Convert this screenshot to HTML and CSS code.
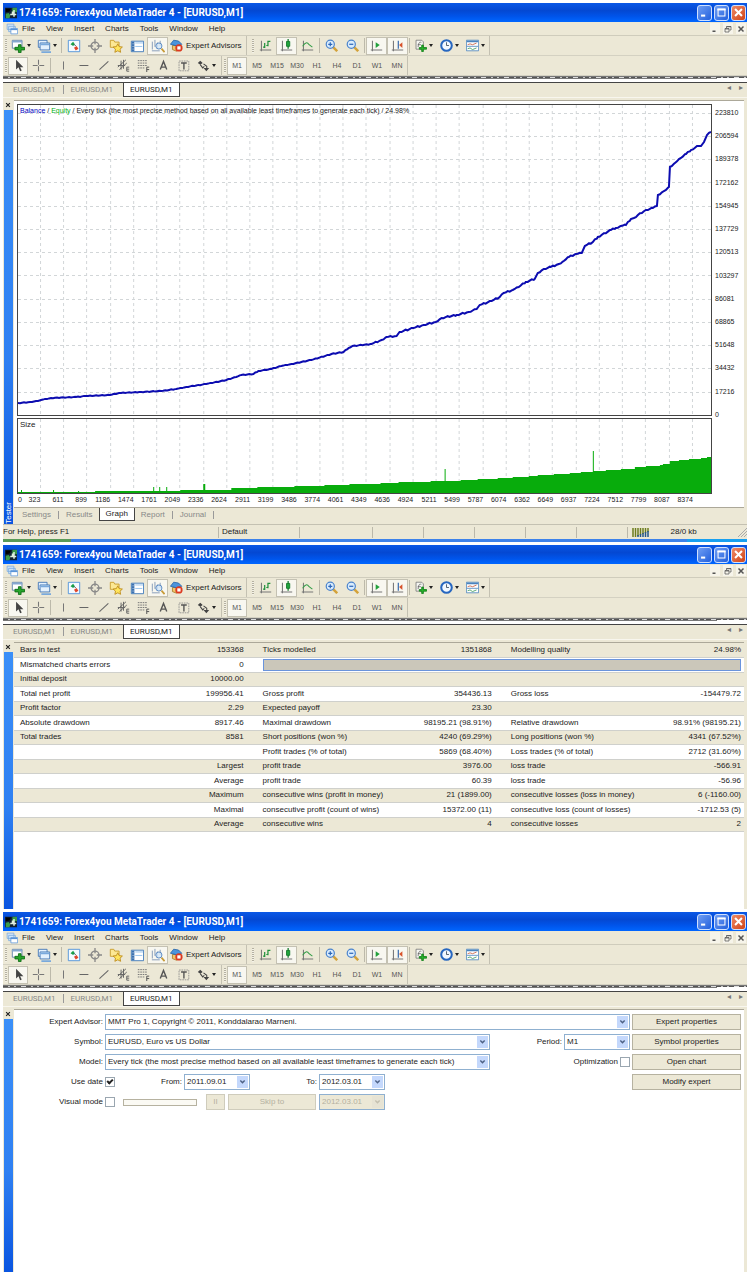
FILE: index.html
```html
<!DOCTYPE html>
<html lang="en">
<head>
<meta charset="utf-8">
<title>1741659: Forex4you MetaTrader 4 - [EURUSD,M1]</title>
<link rel="stylesheet" href="styles.css">
</head>
<body>
<svg class="sprite" aria-hidden="true">
  <symbol id="i-logo" viewBox="0 0 16 16"><path fill="#123" d="M0 1h16v14H0z"/><path fill="#3c9a4a" d="M10 1h6v6h-3l-2 3H9zM1 9l4-1 2 3-1 4H1z"/><path fill="#000" d="M1 2h7L6 6l-5 1z"/><path fill="#dfeee0" d="M11 4h2v9h-2zM7 9h8v2H7zM9 6h2v3H9z"/></symbol>
  <symbol id="i-child" viewBox="0 0 16 16"><path fill="#cfe4fa" stroke="#7aaade" d="M1.500 1.500h9v7h-9zM3.500 4.500h9v7h-9z"/><path fill="#fff" stroke="#5a94d8" d="M6.500 7.500h9v7h-9z"/><path stroke="#5a94d8" stroke-width="2" d="M6 8.500h9"/></symbol>
  <symbol id="i-new" viewBox="0 0 16 16"><path fill="#fff" stroke="#5c7fa8" d="M1.500 1.500h11v9h-11z"/><path stroke="#86a8d0" stroke-width="2" d="M1 3h12"/><path fill="#27a52c" stroke="#0d6d14" d="M8.500 6.500h3v3h4v3h-4v3h-3v-3h-4v-3h4z"/></symbol>
  <symbol id="i-prof" viewBox="0 0 16 16"><path fill="#e4f1fd" stroke="#3f74b4" d="M1.500 1.500h10v8h-10z"/><path fill="#e4f1fd" stroke="#3f74b4" d="M3.500 4.500h11v8h-11z"/><path stroke="#79a9dc" stroke-width="2" d="M4 6h10M5 15h11"/></symbol>
  <symbol id="i-market" viewBox="0 0 16 16"><path fill="#f4faff" stroke="#4a8fd8" d="M1.500 1.500h13v13h-13z"/><path fill="#19a04a" d="M4 6l3-3 2 3-2 2z"/><path fill="#e0452a" d="M8 10l3-2 2 3-3 2z"/><path stroke="#345" d="M8 6l2 2"/></symbol>
  <symbol id="i-cross" viewBox="0 0 16 16"><circle cx="8" cy="8" r="4.500" fill="none" stroke="#888" stroke-width="1.500"/><path stroke="#888" stroke-width="1.500" d="M8 0v6M8 10v6M0 8h6M10 8h6"/></symbol>
  <symbol id="i-star" viewBox="0 0 16 16"><path fill="#fce894" stroke="#c79a28" d="M1.500 3.500v-2h4l1 2h5v6h-10z"/><path fill="#ffe55c" stroke="#bd8a1c" d="M10 5.500l1.600 3.200 3.700.5-2.700 2.400.7 3.600L10 13.500l-3.300 1.700.7-3.600-2.700-2.400 3.700-.5z"/></symbol>
  <symbol id="i-data" viewBox="0 0 16 16"><path fill="#fff" stroke="#3875b8" d="M1.500 2.500h14v12h-14z"/><path fill="#3a70b0" d="M2 3h3v11H2z"/><path stroke="#8dbce8" d="M6 4.500h9M6 8.500h8"/><path stroke="#fff" d="M3 5.500h1M3 8.500h1M3 11.500h1"/></symbol>
  <symbol id="i-test" viewBox="0 0 16 16"><path fill="none" stroke="#7b93b5" d="M1.500 12V3M4.500 9V1M7.500 11V4M10.500 8V2M1 13.500h9"/><circle cx="9" cy="8" r="3.500" fill="#d4e8fa" fill-opacity=".8" stroke="#4d7fbd"/><path stroke="#c89b38" stroke-width="2" d="M12 11l3.500 4"/></symbol>
  <symbol id="i-ea" viewBox="0 0 16 16"><path fill="#f1c66c" stroke="#a67824" d="M3 8h8l1 4-4 3-5-2z"/><path fill="#4b94dc" stroke="#2463a8" d="M0.500 6.500l4-5 6 1 4 4-6 2z"/><circle cx="11" cy="11" r="4.500" fill="#dc3a20"/><path fill="#fff" d="M9 9h4v4H9z"/></symbol>
  <symbol id="i-bar" viewBox="0 0 16 16"><path fill="none" stroke="#777" stroke-width="1.300" d="M3 2v13M1 13.500h14"/><path fill="none" stroke="#20913b" stroke-width="1.500" d="M7 11V5M7 10H5M11 9V2M11 3h3M9 8h2"/></symbol>
  <symbol id="i-candle" viewBox="0 0 16 16"><path fill="none" stroke="#777" stroke-width="1.300" d="M3 2v13M1 13.500h14"/><path stroke="#0b7524" stroke-width="1.500" d="M10 0v12"/><path fill="#1fa33c" stroke="#0b7524" d="M8 3h4v6H8z"/></symbol>
  <symbol id="i-line" viewBox="0 0 16 16"><path fill="none" stroke="#777" stroke-width="1.300" d="M3 2v13M1 13.500h14"/><path fill="none" stroke="#349d48" stroke-width="1.300" d="M2 9c4-6 6-5 8-2l4 3"/></symbol>
  <symbol id="i-zin" viewBox="0 0 16 16"><path stroke="#d3a23a" stroke-width="3" d="M10 10l5 5"/><circle cx="6.500" cy="6.500" r="5" fill="#d9ecfd" stroke="#4a83cc" stroke-width="1.500"/><path stroke="#2c66b8" stroke-width="1.500" d="M4 6.500h5M6.500 4v5"/></symbol>
  <symbol id="i-zout" viewBox="0 0 16 16"><path stroke="#d3a23a" stroke-width="3" d="M10 10l5 5"/><circle cx="6.500" cy="6.500" r="5" fill="#d9ecfd" stroke="#4a83cc" stroke-width="1.500"/><path stroke="#2c66b8" stroke-width="1.500" d="M4 6.500h5"/></symbol>
  <symbol id="i-scroll" viewBox="0 0 16 16"><path fill="none" stroke="#777" stroke-width="1.300" d="M3 2v13M1 13.500h14"/><path fill="#22a03c" d="M7 4l5 3.500L7 11z"/></symbol>
  <symbol id="i-shift" viewBox="0 0 16 16"><path fill="none" stroke="#777" stroke-width="1.300" d="M3 2v13M1 13.500h14"/><path stroke="#3a6cae" stroke-width="1.500" d="M9 2v10"/><path fill="#d8532b" d="M10 7.500L14 4v7z"/></symbol>
  <symbol id="i-ind" viewBox="0 0 16 16"><path fill="#f6f6f2" stroke="#777" d="M2.500 1.500h7l2 2v9h-9z"/><path fill="none" stroke="#666" d="M5 10c1-7 2-6 4-6M4.500 7h4"/><path fill="#27b52c" stroke="#0d7d14" d="M9.500 7.500h2v3h4v2h-4v3h-2v-3h-3v-2h3z"/></symbol>
  <symbol id="i-clock" viewBox="0 0 16 16"><circle cx="8" cy="8" r="6.500" fill="#f2f8ff" stroke="#2767c0" stroke-width="2.500"/><path fill="none" stroke="#345" d="M8 4v4h3"/></symbol>
  <symbol id="i-tpl" viewBox="0 0 16 16"><path fill="#fff" stroke="#4a83bd" d="M0.500 1.500h15v13H.5z"/><path stroke="#4a83bd" stroke-width="2" d="M1 3h14"/><path fill="none" stroke="#c45a3a" d="M2 7l3-1 3 1 5-2"/><path stroke="#4a83bd" d="M1 9h14"/><path fill="none" stroke="#3a9a58" d="M2 12l3-1 3 2 5-2"/></symbol>
  <symbol id="i-ptr" viewBox="0 0 16 16"><path fill="#444" d="M5 1v12l3-3 2 5 2-1-2-4h4z"/></symbol>
  <symbol id="i-plus" viewBox="0 0 16 16"><path stroke="#777" stroke-width="1.300" d="M8 1v6M8 9v6M1 8h6M9 8h6"/></symbol>
  <symbol id="i-v" viewBox="0 0 16 16"><path stroke="#777" stroke-width="1.300" d="M8 3v10"/></symbol>
  <symbol id="i-h" viewBox="0 0 16 16"><path stroke="#666" stroke-width="1.300" d="M3 8h11"/></symbol>
  <symbol id="i-s" viewBox="0 0 16 16"><path stroke="#666" stroke-width="1.300" d="M3 13L14 3"/></symbol>
  <symbol id="i-chan" viewBox="0 0 16 16"><path fill="none" stroke="#666" stroke-width="1.200" d="M1 10l10-9M3 13l9-8M5 2v11M8 1v11M1 8h9M15 10h-3v5h3M12 12.500h3"/></symbol>
  <symbol id="i-fibo" viewBox="0 0 16 16"><path fill="none" stroke="#777" stroke-width="1.200" stroke-dasharray="2 1" d="M1 2h12M1 5h12M1 8h12M1 11h9"/><path fill="none" stroke="#555" stroke-width="1.200" d="M15 10h-3v6M12 13h3"/></symbol>
  <symbol id="i-a" viewBox="0 0 16 16"><path fill="none" stroke="#555" stroke-width="1.700" d="M4 13L8 3l4 10M5.500 10h5"/></symbol>
  <symbol id="i-t" viewBox="0 0 16 16"><path fill="none" stroke="#888" stroke-dasharray="2 1" d="M2.500 2.500h12v12h-12z"/><path fill="none" stroke="#555" stroke-width="1.700" d="M5 5h7M8.500 5v8"/></symbol>
  <symbol id="i-arr" viewBox="0 0 16 16"><path fill="#444" d="M1 5l3-3 3 3-3 2zM8 11h7l-3.500 4z"/><path fill="none" stroke="#444" stroke-width="1.300" d="M4 7l3 4 2-2M8 6l4 3v2"/></symbol>
  <symbol id="i-chev" viewBox="0 0 10 14"><path fill="none" stroke="currentColor" stroke-width="2" d="M2 5l3 3 3-3"/></symbol>
  <symbol id="i-min" viewBox="0 0 16 16"><path fill="currentColor" d="M3 11h6v3H3z"/></symbol>
  <symbol id="i-max" viewBox="0 0 16 16"><path fill="none" stroke="currentColor" stroke-width="1.500" d="M3 3.500h10V13H3z"/><path fill="currentColor" d="M2 2h12v3H2z"/></symbol>
  <symbol id="i-res" viewBox="0 0 16 16"><path fill="none" stroke="currentColor" stroke-width="1.500" d="M2 7h8v7H2zM5 6V3h9v7h-3M5 3.500h9M2 8h8"/></symbol>
  <symbol id="i-x" viewBox="0 0 16 16"><path fill="none" stroke="currentColor" stroke-width="3" d="M3 3l10 10M13 3L3 13"/></symbol>
</svg>

<template id="frame">
  <header class="titlebar">
    <svg class="logo"><use href="#i-logo"/></svg>
    <h1 class="title">1741659: Forex4you MetaTrader 4 - [EURUSD,M1]</h1>
    <div class="caption-buttons">
      <button class="cap" aria-label="Minimize"><svg><use href="#i-min"/></svg></button>
      <button class="cap" aria-label="Maximize"><svg><use href="#i-max"/></svg></button>
      <button class="cap cap-close" aria-label="Close"><svg><use href="#i-x"/></svg></button>
    </div>
  </header>
  <nav class="menubar">
    <svg class="menu-icon"><use href="#i-child"/></svg>
    <button>File</button><button>View</button><button>Insert</button><button>Charts</button><button>Tools</button><button>Window</button><button>Help</button>
    <div class="child-buttons">
      <button aria-label="Minimize chart"><svg><use href="#i-min"/></svg></button>
      <button aria-label="Restore chart"><svg><use href="#i-res"/></svg></button>
      <button aria-label="Close chart"><svg><use href="#i-x"/></svg></button>
    </div>
  </nav>
  <div class="toolbar toolbar-main">
    <div class="tools">
      <button class="tool drop" aria-label="New chart"><svg><use href="#i-new"/></svg></button>
      <button class="tool drop" aria-label="Profiles"><svg><use href="#i-prof"/></svg></button>
      <i class="sep"></i>
      <button class="tool" aria-label="Market watch"><svg><use href="#i-market"/></svg></button>
      <button class="tool" aria-label="Data window"><svg><use href="#i-cross"/></svg></button>
      <button class="tool" aria-label="Navigator"><svg><use href="#i-star"/></svg></button>
      <button class="tool" aria-label="Terminal"><svg><use href="#i-data"/></svg></button>
      <button class="tool on" aria-label="Strategy tester"><svg><use href="#i-test"/></svg></button>
      <button class="tool wide"><svg><use href="#i-ea"/></svg>Expert Advisors</button>
    </div>
    <div class="tools charts">
      <button class="tool" aria-label="Bar chart"><svg><use href="#i-bar"/></svg></button>
      <button class="tool on" aria-label="Candlesticks"><svg><use href="#i-candle"/></svg></button>
      <button class="tool" aria-label="Line chart"><svg><use href="#i-line"/></svg></button>
      <i class="sep"></i>
      <button class="tool" aria-label="Zoom in"><svg><use href="#i-zin"/></svg></button>
      <button class="tool" aria-label="Zoom out"><svg><use href="#i-zout"/></svg></button>
      <i class="sep"></i>
      <button class="tool on" aria-label="Auto scroll"><svg><use href="#i-scroll"/></svg></button>
      <button class="tool on" aria-label="Chart shift"><svg><use href="#i-shift"/></svg></button>
      <i class="sep"></i>
      <button class="tool drop" aria-label="Indicators"><svg><use href="#i-ind"/></svg></button>
      <button class="tool drop" aria-label="Periods"><svg><use href="#i-clock"/></svg></button>
      <button class="tool drop" aria-label="Templates"><svg><use href="#i-tpl"/></svg></button>
    </div>
  </div>
  <div class="toolbar toolbar-draw">
    <div class="tools">
      <button class="tool on" aria-label="Cursor"><svg><use href="#i-ptr"/></svg></button>
      <button class="tool" aria-label="Crosshair"><svg><use href="#i-plus"/></svg></button>
      <i class="sep"></i>
      <button class="tool" aria-label="Vertical line"><svg><use href="#i-v"/></svg></button>
      <button class="tool" aria-label="Horizontal line"><svg><use href="#i-h"/></svg></button>
      <button class="tool" aria-label="Trendline"><svg><use href="#i-s"/></svg></button>
      <button class="tool" aria-label="Channel"><svg><use href="#i-chan"/></svg></button>
      <button class="tool" aria-label="Fibonacci"><svg><use href="#i-fibo"/></svg></button>
      <button class="tool" aria-label="Text"><svg><use href="#i-a"/></svg></button>
      <button class="tool" aria-label="Text label"><svg><use href="#i-t"/></svg></button>
      <button class="tool drop" aria-label="Arrows"><svg><use href="#i-arr"/></svg></button>
    </div>
    <div class="tools frames">
      <button class="tool on">M1</button><button class="tool">M5</button><button class="tool">M15</button><button class="tool">M30</button><button class="tool">H1</button><button class="tool">H4</button><button class="tool">D1</button><button class="tool">W1</button><button class="tool">MN</button>
    </div>
  </div>
  <div class="chart-edge"></div>
  <div class="doc-tabs">
    <button>EURUSD,M1</button><i></i><button>EURUSD,M1</button><button class="active">EURUSD,M1</button>
    <span class="arrows"><button aria-label="Scroll left">◂</button><button aria-label="Scroll right">▸</button></span>
  </div>
</template>

<section class="window">
  <div class="tester">
    <aside class="side"><button class="close" aria-label="Close tester"><svg><use href="#i-x"/></svg></button><div class="rail"><span>Tester</span></div></aside>
    <div class="column">
      <div class="panel graph">
        <div class="plot main-plot">
          <svg viewBox="0 0 692 310" preserveAspectRatio="none"><g id="grid"></g><polyline id="balance" class="balance"/></svg>
          <p class="legend"><span class="blue">Balance</span> / <span class="green">Equity</span> / Every tick (the most precise method based on all available least timeframes to generate each tick) / 24.98%</p>
        </div>
        <div class="y-axis" id="yAxis"></div>
        <div class="plot size-plot">
          <svg viewBox="0 0 692 74" preserveAspectRatio="none"><g id="sizeGrid"></g><path id="size" class="size"/></svg>
          <p class="legend">Size</p>
        </div>
        <div class="x-axis" id="xAxis"></div>
      </div>
      <div class="bottom-tabs"><button>Settings</button><i></i><button>Results</button><button class="active">Graph</button><button>Report</button><i></i><button>Journal</button><i></i></div>
    </div>
  </div>
  <footer class="status">
    <span class="help">For Help, press F1</span><span class="profile">Default</span><span class="broad"></span><span></span><span></span><span></span><span></span><span></span>
    <span class="traffic"><svg viewBox="0 0 18 9"><path stroke="#6d7c1c" stroke-width="1.500" d="M1 0v9M3.500 0v9M6 0v8M8.500 0v7M11 0v6M13.500 0v5M16 0v4"/><path stroke="#25578a" stroke-width="1.500" d="M6 7v2M8.500 6v3M11 5v4M13.500 4v5M16 3v6"/></svg>28/0 kb</span>
    <svg class="grip" viewBox="0 0 10 10"><path stroke="#aaa" d="M1 10l9-9M4 10l6-6M7 10l3-3"/></svg>
  </footer>
  <div class="taskbar-edge"></div>
</section>

<section class="window report-window">
  <div class="tester">
    <aside class="side"><button class="close" aria-label="Close tester"><svg><use href="#i-x"/></svg></button><div class="rail"></div></aside>
    <div class="column"><div class="panel">
      <table class="report">
        <colgroup><col class="c1"><col class="c2"><col class="c3"><col class="c4"><col class="c5"><col class="c6"></colgroup>
        <tbody>
        <tr><td>Bars in test</td><td>153368</td><td>Ticks modelled</td><td>1351868</td><td>Modelling quality</td><td>24.98%</td></tr>
        <tr><td>Mismatched charts errors</td><td>0</td><td colspan="4" class="quality"><div></div></td></tr>
        <tr><td>Initial deposit</td><td>10000.00</td><td></td><td></td><td></td><td></td></tr>
        <tr><td>Total net profit</td><td>199956.41</td><td>Gross profit</td><td>354436.13</td><td>Gross loss</td><td>-154479.72</td></tr>
        <tr><td>Profit factor</td><td>2.29</td><td>Expected payoff</td><td>23.30</td><td></td><td></td></tr>
        <tr><td>Absolute drawdown</td><td>8917.46</td><td>Maximal drawdown</td><td>98195.21 (98.91%)</td><td>Relative drawdown</td><td>98.91% (98195.21)</td></tr>
        <tr><td>Total trades</td><td>8581</td><td>Short positions (won %)</td><td>4240 (69.29%)</td><td>Long positions (won %)</td><td>4341 (67.52%)</td></tr>
        <tr><td></td><td></td><td>Profit trades (% of total)</td><td>5869 (68.40%)</td><td>Loss trades (% of total)</td><td>2712 (31.60%)</td></tr>
        <tr><td></td><td>Largest</td><td>profit trade</td><td>3976.00</td><td>loss trade</td><td>-566.91</td></tr>
        <tr><td></td><td>Average</td><td>profit trade</td><td>60.39</td><td>loss trade</td><td>-56.96</td></tr>
        <tr><td></td><td>Maximum</td><td>consecutive wins (profit in money)</td><td>21 (1899.00)</td><td>consecutive losses (loss in money)</td><td>6 (-1160.00)</td></tr>
        <tr><td></td><td>Maximal</td><td>consecutive profit (count of wins)</td><td>15372.00 (11)</td><td>consecutive loss (count of losses)</td><td>-1712.53 (5)</td></tr>
        <tr><td></td><td>Average</td><td>consecutive wins</td><td>4</td><td>consecutive losses</td><td>2</td></tr>
        </tbody>
      </table>
    </div></div>
  </div>
</section>

<section class="window settings-window">
  <div class="tester">
    <aside class="side"><button class="close" aria-label="Close tester"><svg><use href="#i-x"/></svg></button><div class="rail"></div></aside>
    <div class="column"><div class="panel">
      <form class="settings">
        <div class="row">
          <label class="lead" for="ea">Expert Advisor:</label>
          <span class="combo grow"><select id="ea"><option>MMT Pro 1, Copyright © 2011, Konddalarao Marneni.</option></select><svg><use href="#i-chev"/></svg></span>
          <button type="button" class="push">Expert properties</button>
        </div>
        <div class="row">
          <label class="lead" for="symbol">Symbol:</label>
          <span class="combo grow"><select id="symbol"><option>EURUSD, Euro vs US Dollar</option></select><svg><use href="#i-chev"/></svg></span>
          <span class="extra"><label for="period">Period:</label><span class="combo date"><select id="period"><option>M1</option></select><svg><use href="#i-chev"/></svg></span></span>
          <button type="button" class="push">Symbol properties</button>
        </div>
        <div class="row">
          <label class="lead" for="model">Model:</label>
          <span class="combo grow"><select id="model"><option>Every tick (the most precise method based on all available least timeframes to generate each tick)</option></select><svg><use href="#i-chev"/></svg></span>
          <span class="extra"><label for="opt">Optimization</label><input type="checkbox" id="opt"></span>
          <button type="button" class="push">Open chart</button>
        </div>
        <div class="row">
          <label class="lead" for="usedate">Use date</label>
          <input type="checkbox" id="usedate" checked>
          <label class="from" for="from">From:</label>
          <span class="combo date"><select id="from"><option>2011.09.01</option></select><svg><use href="#i-chev"/></svg></span>
          <label class="from" for="to">To:</label>
          <span class="combo date"><select id="to"><option>2012.03.01</option></select><svg><use href="#i-chev"/></svg></span>
          <button type="button" class="push end">Modify expert</button>
        </div>
        <div class="row">
          <label class="lead" for="visual">Visual mode</label>
          <input type="checkbox" id="visual">
          <span class="groove"></span>
          <button type="button" class="push pause" disabled>II</button>
          <button type="button" class="push skip" disabled>Skip to</button>
          <span class="combo date off"><select aria-label="Skip to date" disabled><option>2012.03.01</option></select><svg><use href="#i-chev"/></svg></span>
        </div>
      </form>
    </div></div>
  </div>
</section>
<script src="app.js"></script>
</body>
</html>
```
FILE: app.js
```js
const frame = document.getElementById('frame');
document.querySelectorAll('.window').forEach(w => w.prepend(frame.content.cloneNode(true)));

const yValues = [223810, 206594, 189378, 172162, 154945, 137729, 120513, 103297, 86081, 68865, 51648, 34432, 17216, 0];
const xValues = [323, 611, 899, 1186, 1474, 1761, 2049, 2336, 2624, 2911, 3199, 3486, 3774, 4061, 4349, 4636, 4924, 5211, 5499, 5787, 6074, 6362, 6649, 6937, 7224, 7512, 7799, 8087, 8374];
document.getElementById('yAxis').innerHTML = yValues.map(v => `<span>${v}</span>`).join('');
document.getElementById('xAxis').innerHTML = '<span class="zero">0</span>' + xValues.map(v => `<span>${v}</span>`).join('');

const STEP = 23.25;
let vertical = '';
for (let i = 1; i < 30; i++) vertical += `<path class="grid-line" d="M${Math.floor(i * STEP) - 0.5} 0V310"/>`;
let horizontal = '';
for (let i = 0; i < 13; i++) horizontal += `<path class="grid-line" d="M0 ${Math.floor(9 + i * STEP) - 0.5}H692"/>`;
document.getElementById('grid').innerHTML = vertical + horizontal;
document.getElementById('sizeGrid').innerHTML = vertical;

const balance = [[0,298],[12,297],[20,296],[23,295],[33,293],[58,292],[68,291],[92,290],[101,288],[123,287],[143,286],[158,284],[168,282],[188,279],[208,275],[218,272],[223,270],[235,269],[240,266],[253,264],[263,261],[273,259],[293,255],[313,249],[325,247],[330,243],[334,241],[353,239],[363,235],[368,232],[378,231],[381,227],[395,223],[405,220],[417,217],[423,213],[438,210],[450,207],[458,204],[461,200],[473,196],[481,192],[485,188],[494,185],[500,182],[507,177],[516,174],[519,168],[525,164],[532,162],[540,159],[545,156],[550,152],[557,149],[563,148],[566,141],[574,137],[579,132],[592,125],[597,123],[602,121],[607,120],[612,114],[615,113],[619,110],[627,105],[634,103],[638,101],[639,90],[645,86],[650,82],[651,62],[656,58],[662,53],[667,49],[672,45],[679,41],[682,41],[685,37],[688,30],[692,27]];
const points = [];
balance.forEach(([x, y], i) => {
  if (i) {
    const [px, py] = balance[i - 1];
    if (x - px > 3) {
      for (let t = px + 2; t < x; t += 2) {
        points.push([t, py + (y - py) * (t - px) / (x - px) + ((t * 7) % 3 - 1) * (x > 360 ? 0.6 : 0.3)]);
      }
    }
  }
  points.push([x, y]);
});
document.getElementById('balance').setAttribute('points', points.map(p => p.join()).join(' '));

const lots = [[0,73],[77,72],[162,71],[213,69],[239,68],[276,67],[306,66],[331,65],[362,64],[380,63],[412,62],[442,61],[459,60],[479,59],[494,58],[510,57],[519,56],[535,55],[551,54],[562,53],[574,52],[587,51],[602,50],[616,48],[627,47],[641,46],[644,45],[651,42],[660,41],[670,40],[682,39],[688,38],[692,38]];
let d = 'M0 74';
lots.forEach(([x, y]) => { d += `H${x}V${y}`; });
d += 'V74Z';
[[3, 71], [35, 71], [60, 72], [135, 68], [141, 68], [148, 68], [185, 65], [186, 65], [426, 50], [574, 32]].forEach(([x, y]) => { d += `M${x} 74V${y}h1V74z`; });
document.getElementById('size').setAttribute('d', d);
```
FILE: styles.css
```css
:root {
  --face: #ece8d6;
  --line: #aca899;
  --edge: #444;
}
* { box-sizing: border-box; }
body {
  margin: 0;
  padding: 3px 3px 0;
  min-height: 100vh;
  display: flex;
  flex-direction: column;
  gap: 3px;
  background: #fff;
  color: #222;
  font: 8px/10px "Liberation Sans", Arial, sans-serif;
}
p, h1 { margin: 0; }
button, select, input { font: inherit; color: inherit; margin: 0; }
button { padding: 0; border: 0; background: none; }
.sprite { display: none; }
.window { display: flex; flex-direction: column; background: var(--face); }

.titlebar {
  display: flex;
  align-items: center;
  height: 19px;
  padding: 0 1px 0 2px;
  background: linear-gradient(#0a58e6, #0448d2 40%, #0054ea 70%, #0066ff);
}
.logo { width: 12px; height: 14px; }
.title {
  flex: 1;
  margin-left: 2px;
  color: #fff;
  font: bold 10px/12px Roboto, sans-serif;
}
.caption-buttons { display: flex; gap: 2px; }
.cap {
  display: flex;
  align-items: center;
  justify-content: center;
  width: 15px;
  height: 16px;
  border: 1px solid #cfe0ff;
  border-radius: 3px;
  background: linear-gradient(135deg, #6f9ef4, #2360dc);
  color: #fff;
}
.cap svg { width: 11px; height: 11px; }
.cap-close { background: linear-gradient(135deg, #ef8a66, #d04418); }

.menubar {
  display: flex;
  align-items: center;
  gap: 11px;
  height: 14px;
  padding-left: 3px;
  border-bottom: 1px solid #cfccbc;
}
.menu-icon { width: 12px; height: 12px; margin-right: -7px; }
.child-buttons { display: flex; gap: 3px; margin-left: auto; padding-right: 1px; color: #555; }
.child-buttons button { width: 10px; height: 11px; background: #f6f4ea; }
.child-buttons svg { width: 8px; height: 8px; margin: 1px auto; display: block; }

.toolbar { display: flex; align-items: stretch; height: 20px; border-bottom: 1px solid #d4d1c2; }
.tools { display: flex; align-items: center; padding-left: 5px; border-right: 1px solid #c4c1b2; }
.tools::before {
  content: "";
  width: 2px;
  height: 14px;
  margin-left: -3px;
  margin-right: 1px;
  background: repeating-linear-gradient(#b4b0a0 0 1px, #f4f2e8 1px 2px);
}
.tool {
  display: flex;
  align-items: center;
  justify-content: center;
  width: 21px;
  height: 18px;
}
.tool svg { width: 14px; height: 14px; flex: none; }
.tool.on { border: 1px solid #c4c1b2; background: #f8f7f0; }
.tool.drop { width: 26px; gap: 2px; }
.tool.drop::after { content: ""; border: 2px solid transparent; border-top: 3px solid #222; border-bottom: 0; }
.tool.wide { width: auto; gap: 3px; padding: 0 4px 0 2px; }
.tool.wide svg { width: 13px; height: 13px; }
.sep { width: 1px; height: 15px; margin: 0 1px; background: #bcb9aa; }
.toolbar-main .tools:first-child { margin-right: 3px; }
.charts .tool svg { width: 13px; height: 13px; }
.toolbar-draw .tool { width: 20px; }
.toolbar-draw .tool.drop { width: 26px; }
.toolbar-draw .sep { margin: 0 2px; }
.toolbar-draw .tools:first-child { padding-right: 2px; }
.toolbar-draw .tool svg { width: 13px; height: 13px; }
.frames { color: #555; font-size: 7px; }

.chart-edge {
  height: 7px;
  border-top: 1px solid #777;
  border-bottom: 1px solid var(--edge);
  background:
    repeating-linear-gradient(90deg, #555 0 5px, #ccc 5px 7px, #555 7px 11px, #ccc 11px 13px, #555 13px 18px, #ddd 18px 23px) 0 0 / 100% 1px no-repeat,
    linear-gradient(#777, #777) 0 1px / 96% 1px no-repeat,
    #fff;
}
.doc-tabs {
  display: flex;
  align-items: stretch;
  height: 15px;
  padding-left: 4px;
  margin-bottom: 2px;
  color: #888;
  border-bottom: 1px solid #f8f6ee;
}
.doc-tabs button { padding: 0 6px; font: 8px/10px Roboto, sans-serif; }
.doc-tabs i { width: 1px; height: 9px; margin: 2px 1px 0; background: #999; }
.doc-tabs .active { margin-left: 4px; height: 14px; padding: 0 6px; background: #fff; border: 1px solid var(--edge); border-top: 0; color: #222; }
.arrows { margin-left: auto; }
.doc-tabs .arrows button { padding: 0 4px; color: #777; }

.tester { display: flex; flex: 1; }
.side { display: flex; flex-direction: column; width: 10px; flex: none; }
.close { height: 10px; }
.close svg { display: block; width: 6px; height: 6px; margin: 0 auto; }
.rail {
  flex: 1;
  display: flex;
  align-items: flex-end;
  justify-content: center;
  margin-left: 1px;
  background: linear-gradient(#3b8ff8, #2f80f2 60%, #0a55e0);
  color: #fff;
}
.rail span { writing-mode: vertical-rl; transform: rotate(180deg); }
.column { flex: 1; display: flex; flex-direction: column; min-width: 0; margin: 0 3px 0 1px; }
.panel { flex: 1; background: #fff; border-top: 1px solid var(--line); }

.graph {
  display: grid;
  grid-template-columns: minmax(0, 1fr) 32px;
  grid-template-rows: auto auto auto;
  row-gap: 2px;
  padding: 3px 0 0 3px;
  font-size: 7px;
  line-height: 8px;
  border-bottom: 1px solid var(--line);
}
.plot { display: grid; border: 1px solid var(--edge); }
.plot > * { grid-area: 1 / 1; }
.plot svg { width: 100%; height: 310px; display: block; }
.size-plot svg { height: 74px; }
.size-plot { grid-row: 2; }
.legend { padding: 1px 2px 0; font-size: 7px; line-height: 9px; }
.size-plot .legend { font-size: 8px; }
.blue { color: #0000c0; }
.green { color: #00b010; }
.grid-line { fill: none; stroke: #d2d6d8; stroke-dasharray: 3 3; vector-effect: non-scaling-stroke; }
.balance { fill: none; stroke: #0c0cb0; stroke-width: 2; vector-effect: non-scaling-stroke; }
.size { fill: #08ac0c; }
.y-axis {
  grid-column: 2;
  grid-row: 1 / 3;
  height: 315px;
  padding: 5px 0 0 3px;
  display: flex;
  flex-direction: column;
  justify-content: space-between;
}
.x-axis {
  grid-row: 3;
  display: grid;
  grid-template-columns: repeat(29, minmax(0, 1fr));
  height: 11px;
  padding-right: 19px;
}
.x-axis span { grid-row: 1; justify-self: end; }
.x-axis .zero { grid-column: 1; justify-self: start; padding-left: 1px; }
.x-axis .zero + span { grid-column: 1; }

.bottom-tabs { display: flex; height: 16px; padding-left: 2px; color: #888; }
.bottom-tabs button { height: 13px; padding: 0 6px; }
.bottom-tabs i { width: 1px; height: 8px; margin: 3px 1px 0; background: #999; }
.bottom-tabs .active { background: #fff; color: #222; border: 1px solid var(--edge); border-top: 0; }

.status { display: flex; align-items: center; height: 15px; border-top: 1px solid #c4c1b2; }
.status > span { flex: 51; height: 11px; border-right: 1px solid #bbb8aa; }
.status .help { flex: 220; }
.status .profile { flex: 79; padding-left: 3px; }
.status .broad { flex: 74; }
.status .traffic { flex: 108; border: 0; padding-left: 4px; display: flex; align-items: center; gap: 21px; }
.traffic svg { width: 18px; height: 9px; }
.grip { width: 10px; height: 10px; }
.taskbar-edge { height: 3px; background: linear-gradient(90deg, #5a9a58 0 68px, #3d82ea 68px 92%, #18a0f0 92%); }

.report-window { min-height: 364px; }
.report { width: 100%; height: 189px; table-layout: fixed; border-collapse: collapse; }
.c1 { width: 15%; } .c2 { width: 17%; } .c3 { width: 21%; } .c4 { width: 13%; } .c5 { width: 21%; } .c6 { width: 13%; }
.report td { height: 13px; padding: 0 4px 0 15px; border-bottom: 1px solid #cfd0cc; white-space: nowrap; }
.report td:first-child { padding-left: 6px; }
.report td:nth-child(even) { text-align: right; padding-left: 0; }
.report td:last-child { padding-right: 3px; }
.report tr:nth-child(odd) { background: var(--face); }
.report .quality { padding: 0 1px 0 15px; }
.quality div { height: 12px; background: #cbc7ba; border: 1px solid #6a94dc; }

.settings-window { flex: 1; }
.settings { display: flex; flex-direction: column; gap: 4px; padding: 4px 3px 0 0; }
.row { display: flex; align-items: center; gap: 2px; height: 16px; }
.row label { white-space: nowrap; }
.lead { width: 89px; text-align: right; }
.combo { display: grid; height: 16px; border: 1px solid #8fb0d0; background: #fff; }
.combo > * { grid-area: 1 / 1; min-width: 0; }
.combo.grow { flex: 1; min-width: 0; }
.combo.date { width: 66px; }
.combo select { appearance: none; width: 100%; border: 0; padding: 0 12px 0 2px; background: none; }
.combo svg { justify-self: end; align-self: center; width: 11px; height: 12px; margin-right: 1px; padding: 1px; background: #c4d8fc; color: #4d6185; pointer-events: none; }
.extra { display: flex; align-items: center; justify-content: flex-end; gap: 2px; width: 138px; }
input[type="checkbox"] {
  appearance: none;
  display: grid;
  place-items: center;
  width: 10px;
  height: 10px;
  border: 1px solid #9aa6b0;
  background: #fff;
}
input[type="checkbox"]:checked::before {
  content: "";
  box-sizing: border-box;
  width: 6px;
  height: 4px;
  margin-bottom: 2px;
  border: solid #222;
  border-width: 0 0 2px 2px;
  transform: rotate(-45deg);
}
.push { width: 109px; height: 16px; border: 1px solid #b6b2a0; background: var(--face); }
.push:disabled { color: #b4b0a0; border-color: #cfccbc; }
.push.end { margin-left: auto; }
.from { width: 65px; text-align: right; }
.groove { width: 74px; height: 7px; margin-left: 6px; border: 1px solid #b6b2a0; background: #fbfaf4; }
.push.pause { width: 19px; margin-left: 7px; }
.push.skip { width: 88px; margin: 0 1px; }
.off { background: var(--face); }
.off select { color: #b4b0a0; opacity: 1; }
.off svg { background: #e6e3d4; color: #c4c0b0; }
```
